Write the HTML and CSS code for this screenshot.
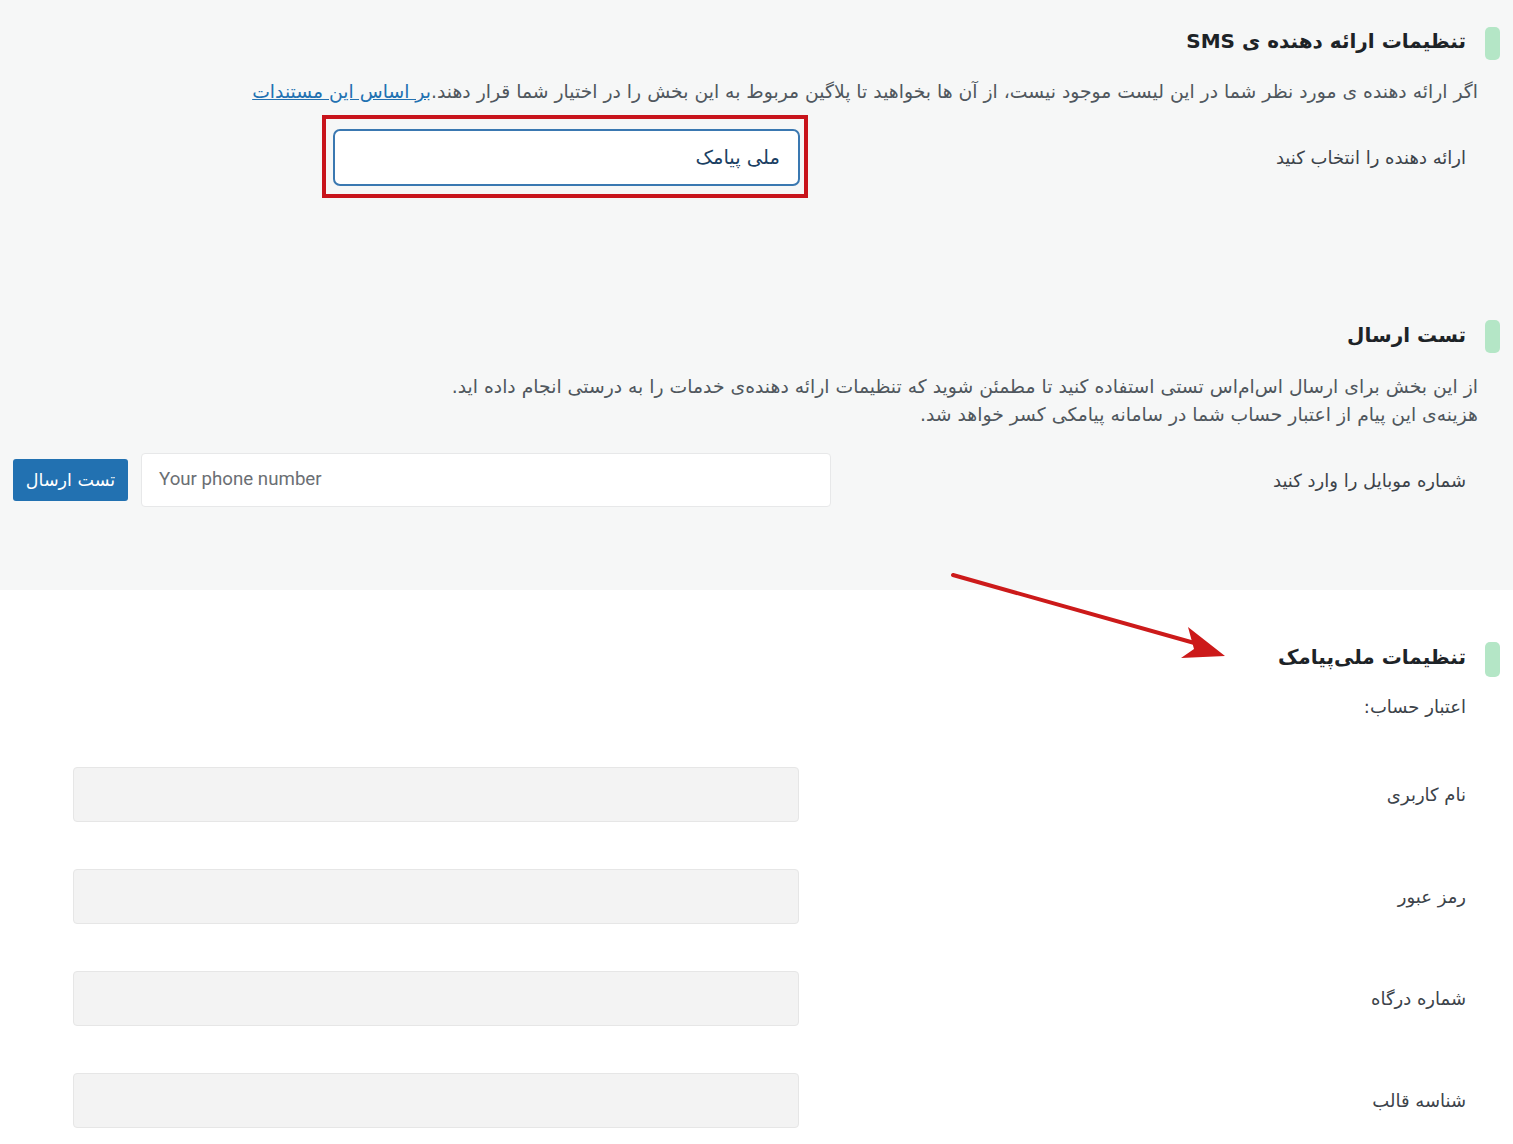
FILE: index.html
```html
<!DOCTYPE html>
<html lang="fa" dir="rtl">
<head>
<meta charset="utf-8">
<title>تنظیمات پیامک</title>
<link rel="stylesheet" href="styles.css">
</head>
<body>
<div class="page">
  <section class="panel gray">
    <div class="block first">
      <h2 class="heading"><span class="bar"></span><span class="htext">تنظیمات ارائه دهنده ی SMS</span></h2>
      <p class="desc">اگر ارائه دهنده ی مورد نظر شما در این لیست موجود نیست، از آن ها بخواهید تا پلاگین مربوط به این بخش را در اختیار شما قرار دهند.<a href="#" class="link">بر اساس این مستندات</a></p>
      <div class="row row-provider">
        <label class="lbl">ارائه دهنده را انتخاب کنید</label>
        <div class="select-wrap">
          <div class="select">ملی پیامک</div>
          <span class="annot"></span>
        </div>
      </div>
    </div>

    <div class="block second">
      <h2 class="heading"><span class="bar"></span><span class="htext">تست ارسال</span></h2>
      <p class="desc">از این بخش برای ارسال اس‌ام‌اس تستی استفاده کنید تا مطمئن شوید که تنظیمات ارائه دهنده‌ی خدمات را به درستی انجام داده اید.<br>هزینه‌ی این پیام از اعتبار حساب شما در سامانه پیامکی کسر خواهد شد.</p>
      <div class="row row-test">
        <label class="lbl">شماره موبایل را وارد کنید</label>
        <div class="phone">Your phone number</div>
        <button class="btn">تست ارسال</button>
      </div>
    </div>
  </section>

  <section class="panel white">
    <div class="block third">
      <h2 class="heading"><span class="bar bar-tall"></span><span class="htext">تنظیمات ملی‌پیامک</span></h2>
      <p class="sub">اعتبار حساب:</p>
      <div class="row row-field"><label class="lbl">نام کاربری</label><div class="field"></div></div>
      <div class="row row-field"><label class="lbl">رمز عبور</label><div class="field"></div></div>
      <div class="row row-field"><label class="lbl">شماره درگاه</label><div class="field"></div></div>
      <div class="row row-field"><label class="lbl">شناسه قالب</label><div class="field"></div></div>
    </div>
  </section>

  <svg class="arrow" width="300" height="100" viewBox="0 0 300 100" xmlns="http://www.w3.org/2000/svg">
    <line x1="3" y1="5" x2="248" y2="74" stroke="#cc1a1a" stroke-width="4" stroke-linecap="round"/>
    <polygon points="275,86 238,57 244,79 231,88" fill="#cc1a1a"/>
  </svg>
</div>
</body>
</html>
```

FILE: styles.css
```css
* { box-sizing: border-box; }
html, body { margin: 0; padding: 0; }
body {
  font-family: "DejaVu Sans", "Noto Sans", sans-serif;
  background: #ffffff;
  color: #3c434a;
  width: 1513px;
}
.page { position: relative; }

.panel.gray { background: #f6f7f7; height: 590px; padding-top: 27px; }
.panel.white { background: #ffffff; padding-top: 53px; padding-bottom: 20px; }

.block { padding-right: 13px; }

.heading {
  display: flex;
  align-items: center;
  gap: 19px;
  margin: 0;
  height: 33px;
  font-size: 20px;
  line-height: 28px;
  font-weight: bold;
  color: #1d2327;
}
.htext { margin-top: -6px; }
.second .htext { margin-top: -3px; }
.bar {
  display: block;
  width: 15px;
  height: 33px;
  border-radius: 5px;
  background: #b4e6c6;
}
.bar-tall { height: 35px; }

.desc {
  margin: 18px 22px 0 0;
  font-size: 18.8px;
  line-height: 28px;
  color: #50575e;
}
.link { color: #2271b1; text-decoration: underline; }

.row { display: flex; align-items: center; padding-right: 34px; }
.lbl { font-size: 18px; color: #3c434a; }

.row-provider { margin-top: 23px; }
.row-provider .lbl { width: 666px; }
.select-wrap { position: relative; width: 467px; }
.select {
  height: 57px;
  border: 2px solid #3a78b1;
  border-radius: 7px;
  background: #fff;
  padding: 0 18px;
  display: flex;
  align-items: center;
  font-size: 19.5px;
  color: #1b3f63;
}
.annot {
  position: absolute;
  top: -14px; bottom: -12px; left: -11px; right: -8px;
  border: 4px solid #c8141c;
  pointer-events: none;
}

.second { margin-top: 134px; }
.second .desc { margin-top: 20px; }
.row-test { margin-top: 24px; }
.row-test .lbl { width: 635px; }
.phone {
  width: 690px;
  height: 54px;
  background: #fff;
  border: 1px solid #e7e8e9;
  border-radius: 4px;
  direction: ltr;
  text-align: left;
  padding-left: 17px;
  padding-bottom: 3px;
  display: flex;
  align-items: center;
  font-family: Roboto, "Liberation Sans", sans-serif;
  font-size: 18.7px;
  color: #6b6f74;
}
.btn {
  margin-right: 13px;
  width: 115px;
  height: 42px;
  border: none;
  border-radius: 3px;
  background: #2271b1;
  color: #fff;
  font-family: "DejaVu Sans", sans-serif;
  font-size: 17.5px;
}

.sub { margin: 17px 34px 0 0; font-size: 18px; line-height: 28px; color: #3c434a; }
.row-field { margin-top: 47px; }
.third .sub + .row-field { margin-top: 46px; }
.row-field .lbl { width: 667px; }
.field {
  width: 726px;
  height: 55px;
  background: #f3f3f3;
  border: 1px solid #e6e6e6;
  border-radius: 4px;
}

.arrow { position: absolute; left: 950px; top: 570px; }
```
